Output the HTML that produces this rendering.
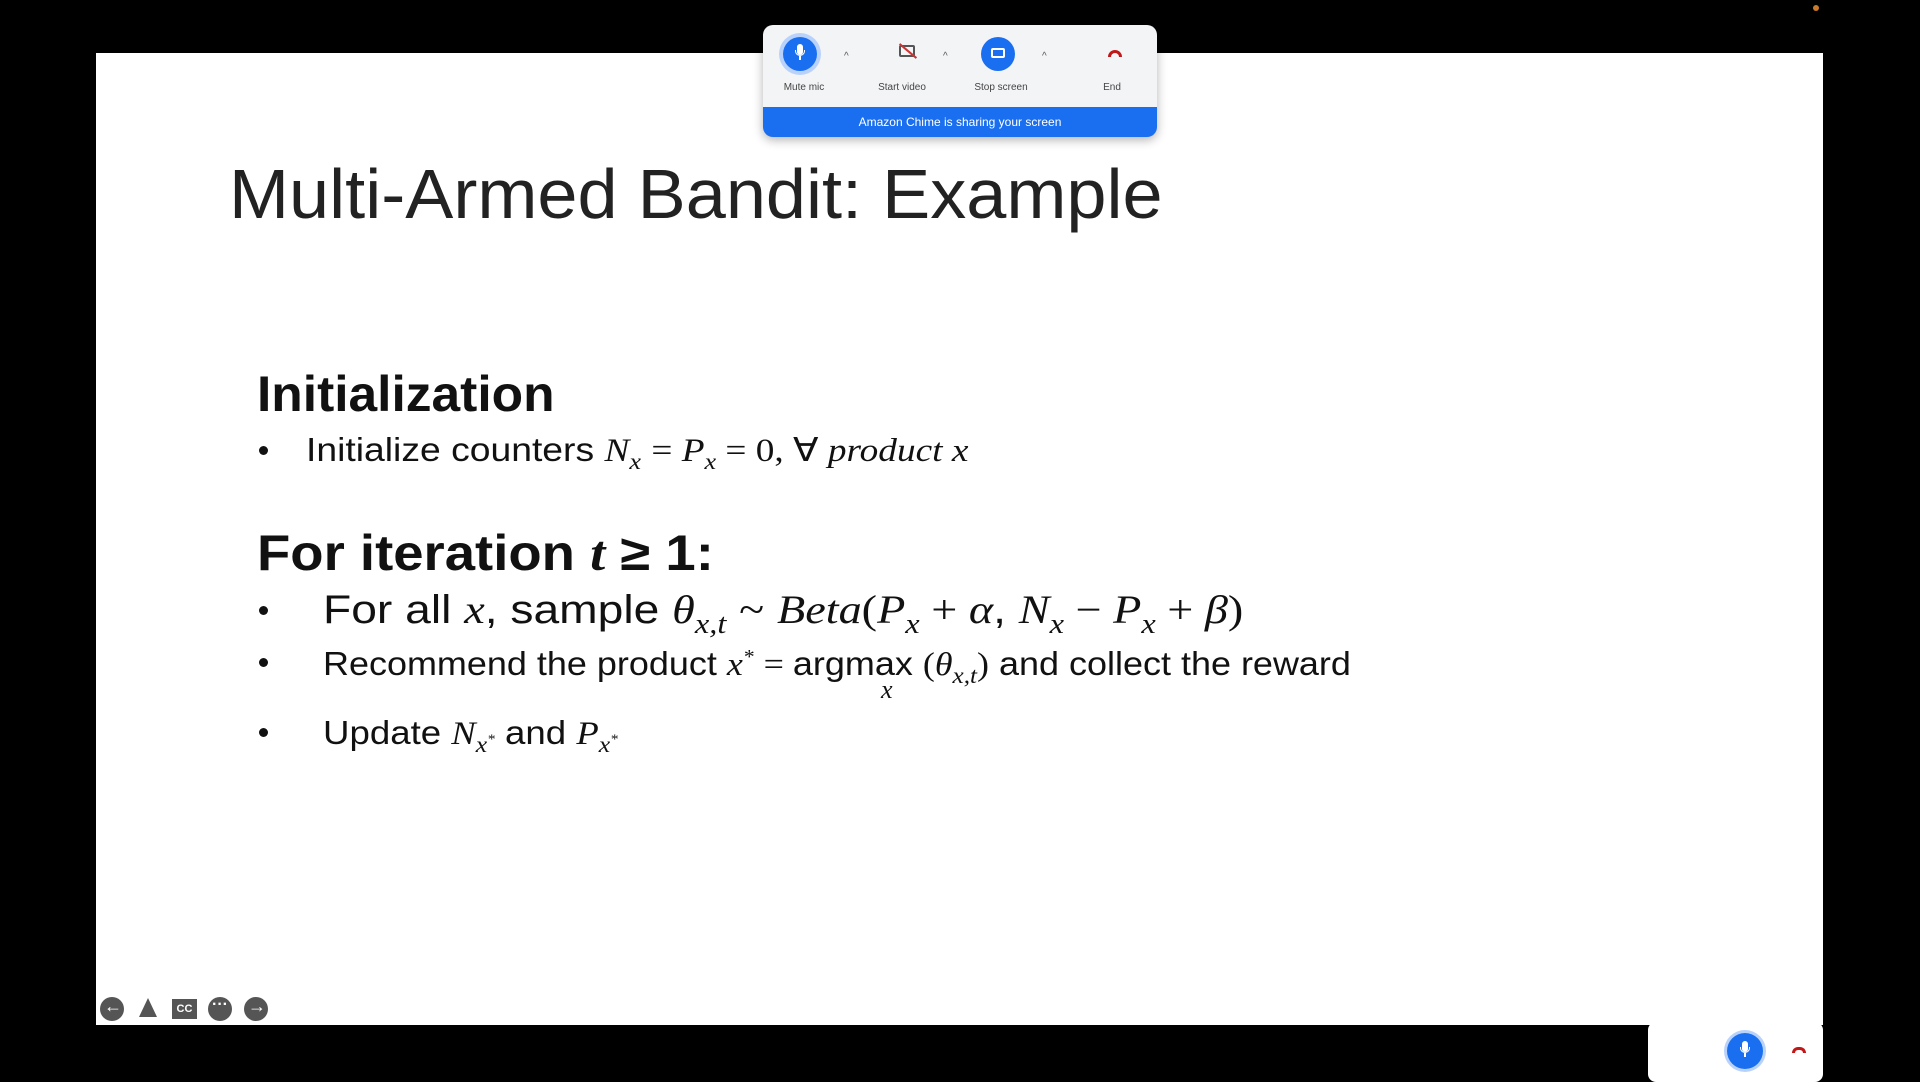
<!DOCTYPE html>
<html><head><meta charset="utf-8"><style>
body{margin:0;width:1920px;height:1080px;background:#000;position:relative;overflow:hidden;font-family:"Liberation Sans",sans-serif}
.slide{position:absolute;left:96px;top:53px;width:1727px;height:972px;background:#fff}
.t{position:absolute;white-space:nowrap;color:#111;transform-origin:0 50%}
.m{font-family:"Liberation Serif",serif;font-style:italic}
.r{font-family:"Liberation Serif",serif}
sub{font-size:0.7em;vertical-align:-0.35em}
sup{font-size:0.6em}
.dot{position:absolute;width:9px;height:9px;border-radius:50%;background:#111}
.tb{position:absolute;left:763px;top:25px;width:394px;height:112px;background:#f3f4f6;border-radius:10px;box-shadow:0 3px 10px rgba(0,0,0,.3);overflow:hidden}
.lbl{position:absolute;top:57px;font-size:10px;color:#444;transform:translateX(-50%)}
.bar{position:absolute;left:0;bottom:0;width:100%;height:30px;background:#1a6ff0;color:#fff;font-size:12px;text-align:center;line-height:30px}
.ic{position:absolute;width:24px;height:24px;border-radius:50%;background:#555;top:997px}
.mic{position:absolute;width:6px;height:11px;background:#fff;border-radius:3px}
</style></head><body>
<div class="slide"></div>
<div class="t" style="left:229px;top:154px;font-size:70px;color:#222;transform:scaleX(1.03)">Multi-Armed Bandit: Example</div>
<div class="t" style="left:257px;top:365px;font-size:50px;font-weight:bold;transform:scaleX(1.03)">Initialization</div>
<div class="dot" style="left:259px;top:446px"></div>
<div class="t" style="left:306px;top:430px;font-size:33px;transform:scaleX(1.13)">Initialize counters <span class="m">N<sub>x</sub></span> <span class="r">= </span><span class="m">P<sub>x</sub></span><span class="r"> = 0, ∀ </span><span class="m">product x</span></div>
<div class="t" style="left:257px;top:524px;font-size:50px;font-weight:bold;transform:scaleX(1.09)">For iteration <span class="m">t</span> ≥ 1:</div>
<div class="dot" style="left:259px;top:606px"></div>
<div class="t" style="left:323px;top:586px;font-size:40px;transform:scaleX(1.155)">For all <span class="m">x</span>, sample <span class="m">θ<sub>x,t</sub></span> <span class="r">~</span> <span class="m">Beta</span><span class="r">(</span><span class="m">P<sub>x</sub></span><span class="r"> + </span><span class="m">α</span>,  <span class="m">N<sub>x</sub></span><span class="r"> − </span><span class="m">P<sub>x</sub></span><span class="r"> + </span><span class="m">β</span><span class="r">)</span></div>
<div class="dot" style="left:259px;top:658px"></div>
<div class="t" style="left:323px;top:645px;font-size:33px;transform:scaleX(1.09)">Recommend the product  <span class="m">x<sup>*</sup></span> <span class="r">= </span>argmax <span class="r">(</span><span class="m">θ<sub>x,t</sub></span><span class="r">)</span> and collect the reward</div>
<div class="t m" style="left:881px;top:675px;font-size:26px">x</div>
<div class="dot" style="left:259px;top:728px"></div>
<div class="t" style="left:323px;top:714px;font-size:33px;transform:scaleX(1.11)">Update <span class="m">N<sub>x<sup>*</sup></sub></span> and <span class="m">P<sub>x<sup>*</sup></sub></span></div>

<div class="tb">
 <div style="position:absolute;left:20px;top:12px;width:34px;height:34px;border-radius:50%;background:#1a6ff0;box-shadow:0 0 0 4px #b9d2fb"></div>
 <div class="mic" style="left:34px;top:19px"></div>
 <div style="position:absolute;left:32px;top:25px;width:10px;height:6px;border:1.5px solid #fff;border-top:none;border-radius:0 0 6px 6px;box-sizing:border-box"></div>
 <div style="position:absolute;left:36px;top:31px;width:2px;height:4px;background:#fff"></div>
 <div style="position:absolute;left:81px;top:26px;font-size:10px;color:#555">^</div>
 <div style="position:absolute;left:136px;top:20px;width:16px;height:12px;border:2px solid #555;box-sizing:border-box;border-radius:2px"></div>
 <div style="position:absolute;left:134px;top:25px;width:22px;height:2px;background:#c33;transform:rotate(40deg)"></div>
 <div style="position:absolute;left:180px;top:26px;font-size:10px;color:#555">^</div>
 <div style="position:absolute;left:218px;top:12px;width:34px;height:34px;border-radius:50%;background:#1a6ff0"></div>
 <div style="position:absolute;left:228px;top:23px;width:14px;height:10px;border:2px solid #fff;box-sizing:border-box;border-radius:2px"></div>
 <div style="position:absolute;left:279px;top:26px;font-size:10px;color:#555">^</div>
 <div style="position:absolute;left:345px;top:25px;width:14px;height:7px;border:3px solid #c01818;border-bottom:none;border-radius:8px 8px 0 0;box-sizing:border-box"></div>
 <div class="lbl" style="left:41px">Mute mic</div>
 <div class="lbl" style="left:139px">Start video</div>
 <div class="lbl" style="left:238px">Stop screen</div>
 <div class="lbl" style="left:349px">End</div>
 <div class="bar">Amazon Chime is sharing your screen</div>
</div>

<div class="ic" style="left:100px"></div><div style="position:absolute;left:104px;top:996px;color:#fff;font-size:18px">←</div>
<div style="position:absolute;left:139px;top:998px;width:0;height:0;border-left:9px solid transparent;border-right:9px solid transparent;border-bottom:19px solid #555"></div>
<div style="position:absolute;left:172px;top:999px;width:25px;height:20px;background:#555;color:#fff;font-size:11px;font-weight:bold;text-align:center;line-height:20px">CC</div>
<div class="ic" style="left:208px"></div><div style="position:absolute;left:212px;top:996px;color:#fff;font-size:16px;font-weight:bold">···</div>
<div class="ic" style="left:244px"></div><div style="position:absolute;left:248px;top:996px;color:#fff;font-size:18px">→</div>

<div style="position:absolute;left:1648px;top:1022px;width:175px;height:60px;background:#fff;border-radius:8px"></div>
<div style="position:absolute;left:1727px;top:1033px;width:36px;height:36px;border-radius:50%;background:#1a6ff0;box-shadow:0 0 0 3px #b9d2fb"></div>
<div class="mic" style="left:1742px;top:1041px"></div>
<div style="position:absolute;left:1740px;top:1047px;width:10px;height:6px;border:1.5px solid #fff;border-top:none;border-radius:0 0 6px 6px;box-sizing:border-box"></div>
<div style="position:absolute;left:1744px;top:1053px;width:2px;height:4px;background:#fff"></div>
<div style="position:absolute;left:1792px;top:1047px;width:14px;height:6px;border:3px solid #c01818;border-bottom:none;border-radius:8px 8px 0 0;box-sizing:border-box"></div>
<div style="position:absolute;left:1813px;top:5px;width:6px;height:6px;border-radius:50%;background:#c87a2a"></div>
</body></html>
